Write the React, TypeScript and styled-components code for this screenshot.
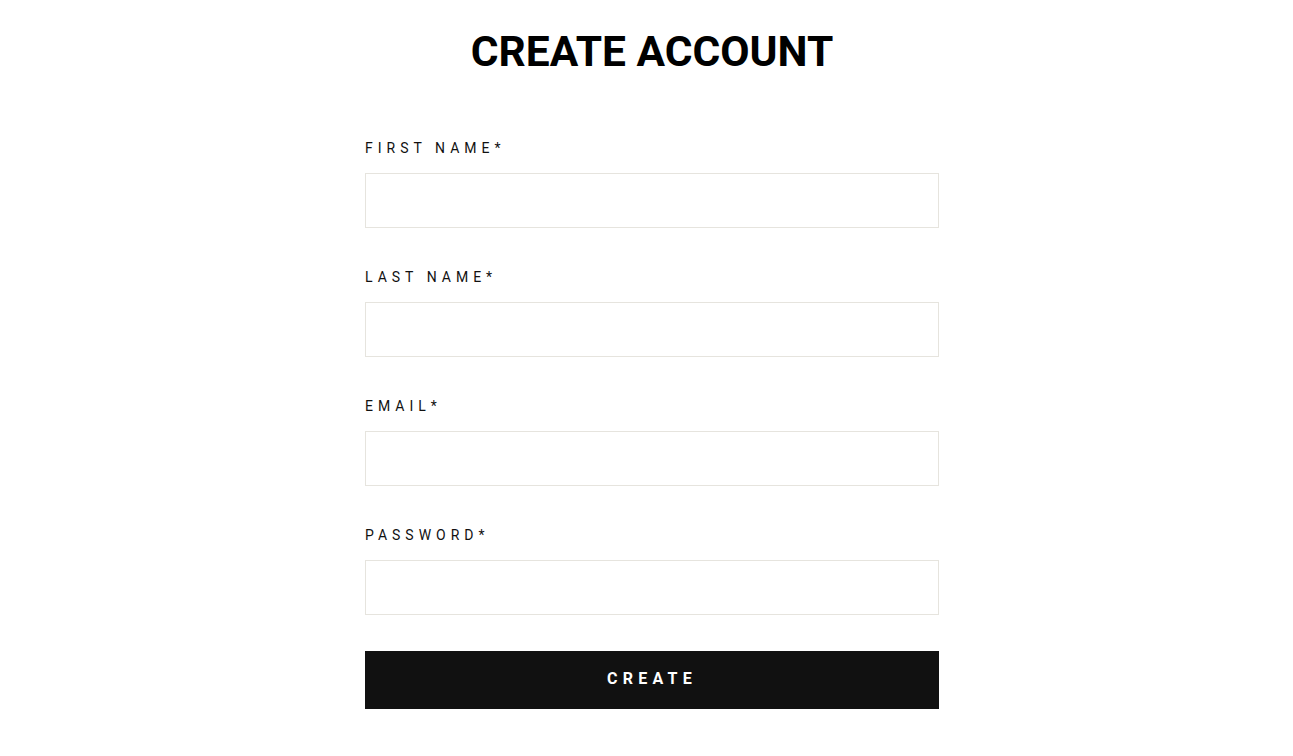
import React from "react";
import styled, { createGlobalStyle } from "styled-components";

const Global = createGlobalStyle`
  html, body { margin: 0; padding: 0; background: #fff; }
  body { font-family: Roboto, "Liberation Sans", sans-serif; color: #000; }
  * { box-sizing: border-box; }
`;

const Page = styled.main`
  display: flex;
  flex-direction: column;
  align-items: center;
  padding-top: 26px;
  padding-left: 11px;
`;

const Title = styled.h1`
  margin: 0;
  font-family: Roboto, sans-serif;
  font-weight: 700;
  font-size: 42.5px;
  line-height: 52px;
  letter-spacing: 0;
  color: #000;
`;

const Form = styled.form`
  width: 574px;
  margin-top: 60px;
  display: flex;
  flex-direction: column;
  gap: 39px;
`;

const Field = styled.div`
  display: flex;
  flex-direction: column;
`;

const Label = styled.label`
  font-size: 14px;
  line-height: 20px;
  letter-spacing: 5px;
  text-transform: uppercase;
  color: #111;
  margin-bottom: 15px;
`;

const Input = styled.input`
  height: 55px;
  border: 1px solid #e6e4de;
  background: #fff;
  padding: 0 16px;
  font: inherit;
  outline: none;
`;

const Button = styled.button`
  margin-top: -3px;
  height: 58px;
  background: #111;
  color: #fff;
  border: none;
  font-family: Roboto, sans-serif;
  font-weight: 700;
  font-size: 16px;
  line-height: 20px;
  padding: 0 0 2px;
  letter-spacing: 5.3px;
  text-transform: uppercase;
  cursor: pointer;
`;

const fields = ["First Name*", "Last Name*", "Email*", "Password*"];

export default function App() {
  return (
    <>
      <Global />
      <Page>
        <Title>CREATE ACCOUNT</Title>
        <Form onSubmit={(e) => e.preventDefault()}>
          {fields.map((f) => (
            <Field key={f}>
              <Label>{f}</Label>
              <Input type={f.startsWith("Password") ? "password" : "text"} />
            </Field>
          ))}
          <Button type="submit">Create</Button>
        </Form>
      </Page>
    </>
  );
}
